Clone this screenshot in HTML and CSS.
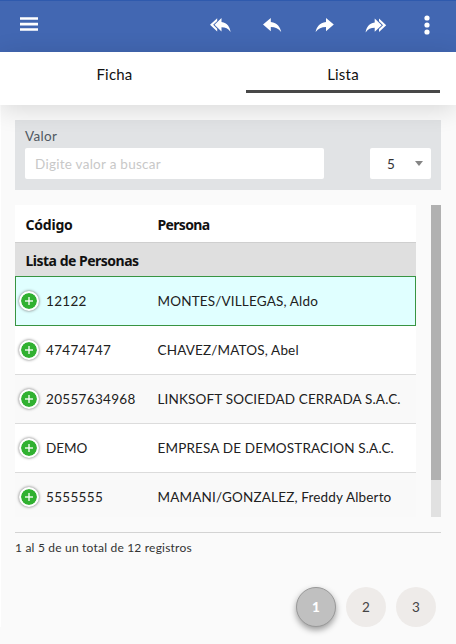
FILE: index.html
```html
<!DOCTYPE html>
<html lang="es">
<head>
<meta charset="utf-8">
<title>Lista de Personas</title>
<link rel="stylesheet" href="styles.css">
</head>
<body>
<header class="toolbar">
  <svg class="menu" width="20" height="16" viewBox="0 0 20 16" fill="#fff"><path d="M1 .2h18v2.600H1zM1 5.800h18v2.600H1zM1 11.200h18v2.600H1z"/></svg>
  <nav class="actions">
    <svg class="action" viewBox="0 0 24 18" fill="#fff"><path d="M9.200 2.200v2.700L5.200 8.800l4 3.900v2.800L2 8.800z"/><path d="M13.500 6V2L6.500 8.800l7 6.600v-4.100c4 0 6.700 1.200 9.100 4.700C21.900 11 19.500 6.900 13.500 6z"/></svg>
    <svg class="action" viewBox="0 0 24 18" fill="#fff"><path d="M10.800 6V1.900L3 8.600l7.800 6.700v-4.200c4.600 0 7.700 1.400 10.400 4.900-1-5-3.700-9.100-10.400-10z"/></svg>
    <svg class="action" viewBox="0 0 24 18" fill="#fff"><path d="M14 6V1.900l7.800 6.700-7.800 6.700v-4.200c-4.600 0-7.700 1.400-10.400 4.900 1-5 3.700-9.100 10.400-10z"/></svg>
    <svg class="action" viewBox="0 0 24 18" fill="#fff"><path d="M15 2.600v2.700l4 3.900-4 3.900v2.800l7.200-6.700z"/><path d="M10.700 6.400v-4l7 6.800-7 6.600v-4.100c-4 0-6.700 1.200-9.100 4.700C2.300 11.400 4.700 7.300 10.700 6.400z"/></svg>
  </nav>
  <svg class="more" width="6" height="22" viewBox="0 0 6 22" fill="#fff"><circle cx="3" cy="4" r="2.600"/><circle cx="3" cy="11" r="2.600"/><circle cx="3" cy="18" r="2.600"/></svg>
</header>
<div class="tabs">
  <div class="tab">Ficha</div>
  <div class="tab active">Lista</div>
</div>
<main class="content">
  <section class="filter">
    <div class="label">Valor</div>
    <div class="fields">
      <div class="search">Digite valor a buscar</div>
      <div class="select"><span>5</span><svg width="8" height="5" viewBox="0 0 8 5"><path d="M0 0h8L4 5z" fill="#858585"/></svg></div>
    </div>
  </section>
  <section class="listing">
    <div class="table">
      <div class="head"><span class="c1">Código</span><span class="c2">Persona</span></div>
      <div class="group">Lista de Personas</div>
      <div class="row selected"><i class="plus"></i><span class="code">12122</span><span class="name">MONTES/VILLEGAS, Aldo</span></div>
      <div class="row"><i class="plus"></i><span class="code">47474747</span><span class="name">CHAVEZ/MATOS, Abel</span></div>
      <div class="row odd"><i class="plus"></i><span class="code">20557634968</span><span class="name">LINKSOFT SOCIEDAD CERRADA S.A.C.</span></div>
      <div class="row"><i class="plus"></i><span class="code demo">DEMO</span><span class="name">EMPRESA DE DEMOSTRACION S.A.C.</span></div>
      <div class="row odd"><i class="plus"></i><span class="code">5555555</span><span class="name">MAMANI/GONZALEZ, Freddy Alberto</span></div>
    </div>
    <div class="scroll"><div class="thumb"></div></div>
  </section>
  <div class="summary">1 al 5 de un total de 12 registros</div>
  <nav class="pages"><span class="page current">1</span><span class="page">2</span><span class="page">3</span></nav>
</main>
</body>
</html>
```
FILE: styles.css
```css
* { box-sizing: border-box; }
body { margin: 0; width: 456px; height: 644px; overflow: hidden; background: #fafafa; color: #212121; font-family: Lato, sans-serif; font-size: 13.5px; }
svg { display: block; }
.toolbar { height: 52px; background: #4267b2; border-top: 1px solid #2f5aad; display: flex; align-items: center; padding: 0 26px 4px 19px; }
.actions { display: flex; gap: 28px; margin-left: auto; }
.action { width: 24px; height: 18px; }
.more { margin-left: 36px; }
.tabs { height: 53px; background: #fff; display: flex; gap: 33px; padding: 0 16px; box-shadow: 0 4px 26px rgba(0,0,0,.14); position: relative; }
.tab { width: 197px; height: 40px; padding-top: 4px; line-height: 37px; text-align: center; font-size: 15px; letter-spacing: .2px; color: #111; }
.tabs .active { width: 194px; height: 41px; border-bottom: 3px solid #484848; }
.content { padding: 15px 15px 0 14px; border-left: 1px solid #fff; }
.filter { height: 70px; background: #e1e3e5; padding: 8px 10px 0; }
.label { height: 20px; line-height: 16px; color: #505861; letter-spacing: .35px; }
.fields { display: flex; justify-content: space-between; }
.search, .select { height: 31px; line-height: 32px; background: #fff; border-radius: 2px; }
.search { width: 299px; padding-left: 10px; color: #c8c8c8; letter-spacing: .27px; }
.select { width: 61px; display: flex; align-items: center; justify-content: space-between; padding: 0 8px 0 17px; color: #333; }
.listing { display: flex; justify-content: space-between; height: 312px; margin-top: 15px; }
.table { width: 401px; height: 312px; overflow: hidden; background: #fff; }
.head, .group { display: flex; padding-left: 10.5px; font: 700 14px "Noto Sans", sans-serif; color: #111; }
.head { height: 38px; line-height: 39px; border-bottom: 1px solid #cfcfcf; }
.c1 { width: 132px; letter-spacing: -.2px; }
.c2 { letter-spacing: -.65px; }
.group { height: 33px; line-height: 35px; background: #dfdfdf; letter-spacing: -.5px; }
.row { height: 49px; display: flex; align-items: center; border-bottom: 1px solid #dcdcdc; padding-left: 4px; }
.odd { background: #f9f9f9; }
.selected { height: 50px; background: #e0ffff; border: 1px solid #389442; padding-left: 3px; }
.plus { flex: none; width: 20px; height: 20px; border-radius: 50%; border: 2px solid #fff; background: linear-gradient(rgba(255,255,255,.65),rgba(255,255,255,.65)) center/8px 2px no-repeat, linear-gradient(rgba(255,255,255,.65),rgba(255,255,255,.65)) center/2px 8px no-repeat, #31b131; background-clip: padding-box; box-shadow: 0 0 3px #666; }
.code { width: 111.5px; margin-left: 7px; letter-spacing: .32px; flex: none; }
.demo { letter-spacing: 0; }
.name { white-space: nowrap; letter-spacing: .16px; }
.scroll { width: 10px; background: #e1e1e1; }
.thumb { height: 275px; background: #b1b1b1; }
.summary { margin-top: 15px; height: 35px; border-top: 1px solid #d3d3d3; padding-top: 6px; line-height: 17px; font-size: 12px; letter-spacing: .2px; color: #333; }
.pages { display: flex; justify-content: flex-end; gap: 10px; margin-top: 20px; padding-right: 5px; }
.page { width: 40px; height: 40px; border-radius: 50%; background: #eeebe9; color: #444; text-align: center; line-height: 40px; }
.current { background: #c0c0c0; border: 1px solid #999; color: #fff; font-weight: 900; line-height: 38px; box-shadow: 0 3px 6px rgba(0,0,0,.38); }
```
